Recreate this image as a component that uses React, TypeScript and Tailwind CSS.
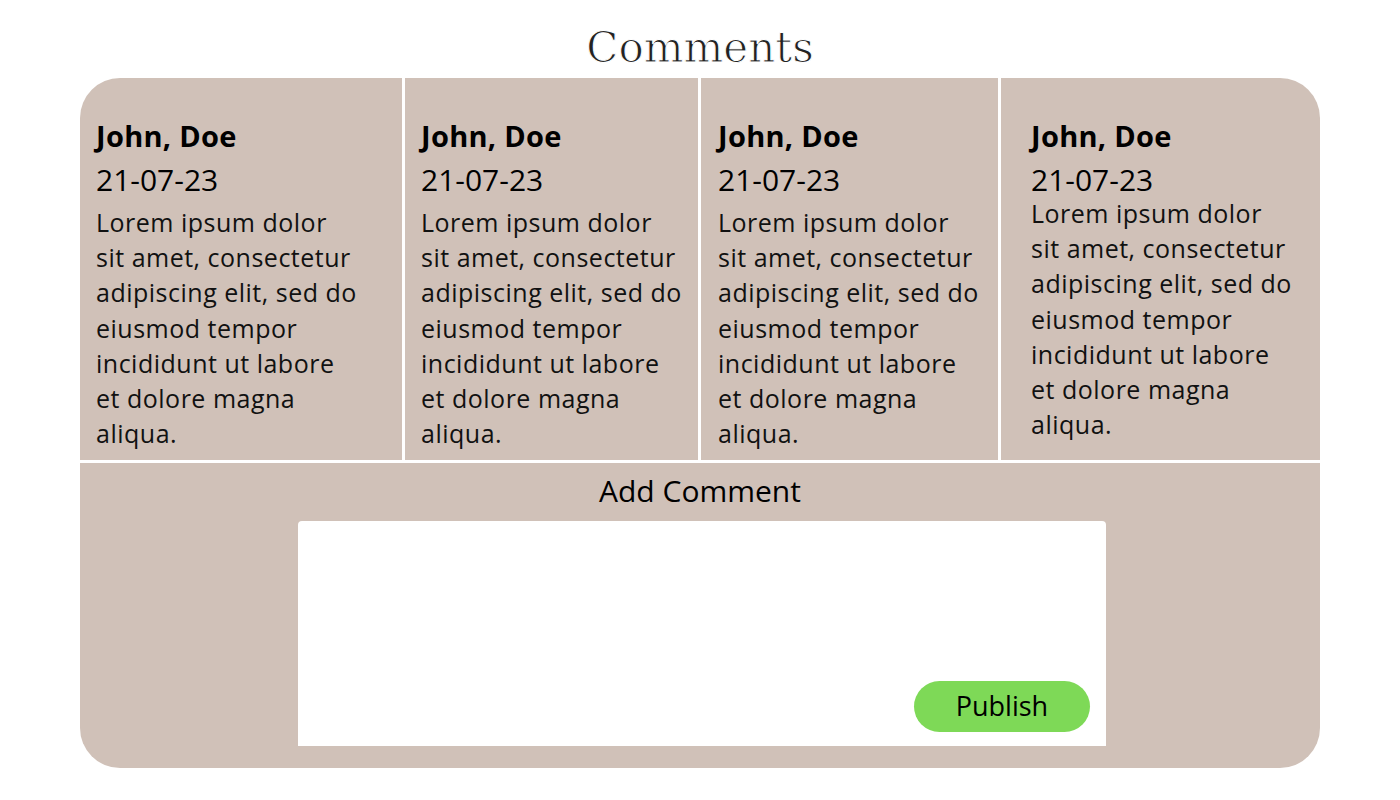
import React from "react";

type Comment = {
  name: string;
  date: string;
  text: string;
};

const LOREM =
  "Lorem ipsum dolor sit amet, consectetur adipiscing elit, sed do eiusmod tempor incididunt ut labore et dolore magna aliqua.";

const comments: Comment[] = [
  { name: "John, Doe", date: "21-07-23", text: LOREM },
  { name: "John, Doe", date: "21-07-23", text: LOREM },
  { name: "John, Doe", date: "21-07-23", text: LOREM },
  { name: "John, Doe", date: "21-07-23", text: LOREM },
];

// widths / paddings of the four columns, measured off the mockup
const columns = [
  "w-[325px] pl-4 border-r-[3px] border-white",
  "w-[296px] pl-4 border-r-[3px] border-white",
  "w-[300px] pl-[17px] border-r-[3px] border-white",
  "flex-1 pl-[30px]",
];

function CommentCard({ comment, className, last }: { comment: Comment; className: string; last?: boolean }) {
  return (
    <div className={`h-full pt-[40px] ${className}`}>
      <p className="text-[29px] font-bold leading-[36px] tracking-[0.01em] text-black">{comment.name}</p>
      <p className="mt-[6px] text-[30px] leading-[40px] text-black">{comment.date}</p>
      <p
        className={`max-w-[266px] text-[25px] leading-[35.2px] tracking-[0.02em] text-[#111] ${
          last ? "-mt-[4px]" : "mt-[5px]"
        }`}
      >
        {comment.text}
      </p>
    </div>
  );
}

export default function App() {
  return (
    <div className="min-h-screen bg-white flex flex-col items-center" style={{ fontFamily: "'Open Sans', sans-serif" }}>
      <h1
        className="pt-[21px] h-[78px] text-[42px] leading-[54px] font-normal text-[#222] [-webkit-text-stroke:1px_white]"
        style={{ fontFamily: "'DejaVu Serif', serif" }}
      >
        Comments
      </h1>

      <div className="w-[1240px] h-[690px] rounded-[40px] bg-[#d0c1b8] overflow-hidden flex flex-col">
        {/* Comment list */}
        <div className="h-[385px] flex border-b-[3px] border-white">
          {comments.map((c, i) => (
            <CommentCard key={i} comment={c} className={columns[i]} last={i === 3} />
          ))}
        </div>

        {/* Add comment */}
        <div className="flex-1 flex flex-col items-center">
          <p className="mt-[9px] text-[30px] leading-[38px] text-black">Add Comment</p>
          <div className="mt-[11px] ml-[4px] w-[808px] h-[225px] bg-white rounded-t-[4px] flex items-end justify-end pr-4 pb-[14px]">
            <button className="w-[176px] h-[51px] rounded-full bg-[#7ed957] text-[27px] text-black">Publish</button>
          </div>
        </div>
      </div>
    </div>
  );
}
